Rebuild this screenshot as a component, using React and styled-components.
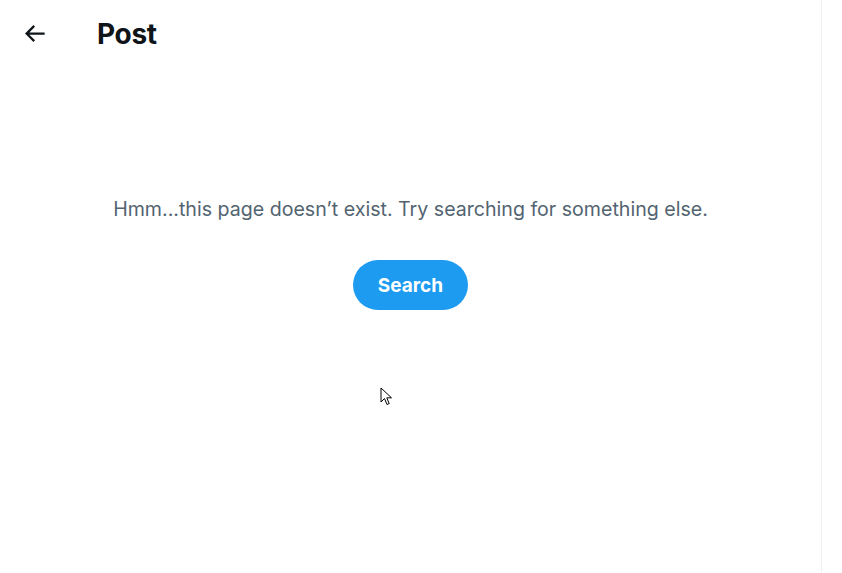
import React from 'react'
import styled, {createGlobalStyle} from 'styled-components'

const GlobalStyle = createGlobalStyle`
html, body {
  margin: 0;
  padding: 0;
  background: #ffffff;
  font-family: Inter, "Noto Sans", "Liberation Sans", sans-serif;
}
`;

const Page = styled.div`
display: flex;
height: 573px;
position: relative;
overflow: hidden;
`;

const Column = styled.main`
width: 821px;
border-right: 1px solid #eff3f4;
display: flex;
flex-direction: column;
`;

const Header = styled.header`
height: 53px;
display: flex;
align-items: center;
padding: 0 16px;
box-sizing: border-box;
`;

const BackButton = styled.button`
width: 36px;
height: 36px;
border: 0;
border-radius: 9999px;
background: transparent;
display: flex;
align-items: center;
justify-content: center;
padding: 0;
margin-right: 45px;
margin-top: 14px;
cursor: pointer;
color: #0f1419;
`;

const Title = styled.h2`
margin: 14px 0 0 0;
font-size: 28px;
font-weight: 700;
color: #0f1419;
letter-spacing: -0.3px;
`;

const Empty = styled.section`
display: flex;
flex-direction: column;
align-items: center;
padding-top: 144px;
gap: 39px;
`;

const Message = styled.p`
margin: 0;
font-size: 19.6px;
line-height: 24px;
color: #536471;
`;

const SearchButton = styled.button`
height: 50px;
padding: 0 25px;
border: 0;
border-radius: 9999px;
background: #1d9bf0;
color: #ffffff;
font-family: inherit;
font-size: 19px;
font-weight: 700;
cursor: pointer;
`;

const Cursor = styled.svg`
position: absolute;
left: 380px;
top: 387px;
`;

const App = () => {
  return (
    <Page>
      <GlobalStyle/>
      <Column>
        <Header>
          <BackButton aria-label="Back">
            <svg width="27" height="27" viewBox="0 0 24 24" fill="currentColor">
              <path d="M7.414 13l5.043 5.04-1.414 1.42L3.586 12l7.457-7.46 1.414 1.42L7.414 11H21v2H7.414z"/>
            </svg>
          </BackButton>
          <Title>Post</Title>
        </Header>
        <Empty>
          <Message>Hmm...this page doesn’t exist. Try searching for something else.</Message>
          <SearchButton>Search</SearchButton>
        </Empty>
      </Column>
      <Cursor width="13" height="20" viewBox="0 0 13 20">
        <path d="M1 1 L1 15 L4.5 11.5 L7 17.5 L9.2 16.6 L6.8 10.8 L11.5 10.8 Z" fill="#ffffff" stroke="#000000" strokeWidth="1" strokeLinejoin="miter"/>
      </Cursor>
    </Page>
  )
}

export default App
